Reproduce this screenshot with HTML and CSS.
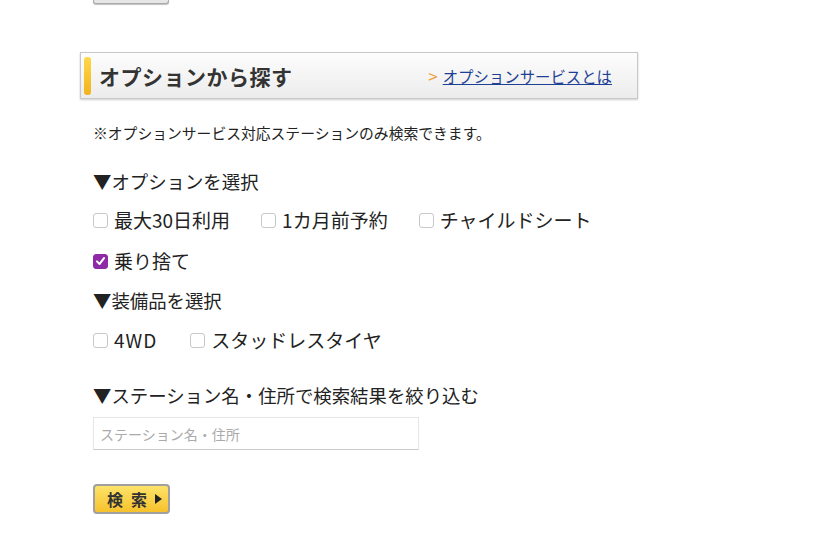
FILE: index.html
```html
<!DOCTYPE html>
<html lang="ja">
<head>
<meta charset="utf-8">
<link rel="stylesheet" href="styles.css">
</head>
<body>
<div class="page">
  <div class="top-btn"></div>
  <div class="head-box">
    <span class="bar"></span>
    <h2 class="head-title">オプションから探す</h2>
    <a class="head-link" href="#"><span class="gt">&gt;</span><span class="u">オプションサービスとは</span></a>
  </div>
  <p class="note">※オプションサービス対応ステーションのみ検索できます。</p>
  <div class="sec-title t1">▼オプションを選択</div>
  <div class="row r1">
    <label class="opt"><span class="cb"></span>最大30日利用</label>
    <label class="opt"><span class="cb"></span>1カ月前予約</label>
    <label class="opt"><span class="cb"></span>チャイルドシート</label>
  </div>
  <div class="row r2">
    <label class="opt"><span class="cb on"><svg viewBox="0 0 14 14" width="14" height="14"><path d="M3.2 7.4 L6 10.2 L10.8 3.8" fill="none" stroke="#fff" stroke-width="2.2" stroke-linecap="round" stroke-linejoin="round"/></svg></span>乗り捨て</label>
  </div>
  <div class="sec-title t2">▼装備品を選択</div>
  <div class="row r3">
    <label class="opt"><span class="cb"></span>4WD</label>
    <label class="opt"><span class="cb"></span>スタッドレスタイヤ</label>
  </div>
  <div class="sec-title t3">▼ステーション名・住所で検索結果を絞り込む</div>
  <div class="field"><span class="ph">ステーション名・住所</span></div>
  <button class="search-btn"><span class="bt">検</span><span class="bt">索</span><span class="tri"></span></button>
</div>
</body>
</html>
```
FILE: styles.css
```css
* { box-sizing: border-box; }
body {
  margin: 0;
  background: #fff;
  font-family: "Noto Sans CJK JP", "Noto Sans", sans-serif;
  color: #222;
}
.page {
  height: 547px;
  padding-left: 80px;
}
.top-btn {
  margin-left: 13px;
  width: 76px;
  height: 4px;
  border: 1px solid #aaa;
  border-top: none;
  border-radius: 0 0 3px 3px;
  background: #e6e6e6;
  box-shadow: 0 1px 1px rgba(0,0,0,0.25);
}
.head-box {
  margin-top: 48px;
  width: 558px;
  height: 47px;
  border: 1px solid #c8c8c8;
  background: linear-gradient(#fdfdfd, #ececec);
  box-shadow: 0 1px 2px rgba(0,0,0,0.2);
  display: flex;
  align-items: center;
  padding-left: 3px;
}
.bar {
  width: 7px;
  height: 38px;
  border-radius: 3px;
  background: linear-gradient(#ffd84a, #f2b21c);
}
.head-title {
  margin: 0 0 0 8px;
  font-size: 21px;
  font-weight: bold;
  color: #333;
  letter-spacing: 0.5px;
  flex: 1;
}
.head-link {
  margin-right: 25px;
  font-size: 15.4px;
  color: #1d3f94;
  text-decoration: none;
}
.head-link .gt { color: #f0a040; margin-right: 5px; font-size: 17px; }
.head-link .u { text-decoration: underline; }
.note {
  margin: 24px 0 0 13px;
  font-size: 14.8px;
  line-height: 20px;
  color: #222;
}
.sec-title {
  margin-left: 13px;
  font-size: 18.4px;
  line-height: 26px;
}
.t1 { margin-top: 25px; }
.t2 { margin-top: 13px; }
.t3 { margin-top: 29px; }
.row {
  margin-left: 13px;
  display: flex;
  gap: 31px;
  font-size: 19px;
  line-height: 26px;
}
.r1 { margin-top: 13px; }
.r2 { margin-top: 15px; }
.r3 { margin-top: 14px; gap: 33px; }
.r3 .opt:first-child { letter-spacing: 1px; }
.opt { display: flex; align-items: center; }
.cb {
  width: 15px;
  height: 15px;
  border: 1px solid #c8c8c8;
  border-radius: 3px;
  background: #fff;
  margin-right: 6px;
  display: inline-flex;
  align-items: center;
  justify-content: center;
}
.cb.on { background: #8e2aa6; border-color: #8e2aa6; }
.field {
  margin: 9px 0 0 13px;
  width: 326px;
  height: 33px;
  border: 1px solid #e6e6e6;
  border-bottom-color: #ccc;
  display: flex;
  align-items: center;
  padding-left: 6px;
}
.ph { font-size: 14px; color: #aaa; }
.search-btn {
  margin: 34px 0 0 13px;
  width: 77px;
  height: 30px;
  border: 2px solid #a0a0a0;
  border-radius: 4px;
  background: linear-gradient(#fde36a, #f6c22c);
  font-family: inherit;
  font-size: 16px;
  font-weight: bold;
  color: #333;
  display: flex;
  align-items: center;
  justify-content: flex-start;
  gap: 8px;
  padding: 0 0 0 12px;
}
.tri {
  width: 0; height: 0;
  border-top: 5px solid transparent;
  border-bottom: 5px solid transparent;
  border-left: 7px solid #222;
  margin-left: 0;
}
```
